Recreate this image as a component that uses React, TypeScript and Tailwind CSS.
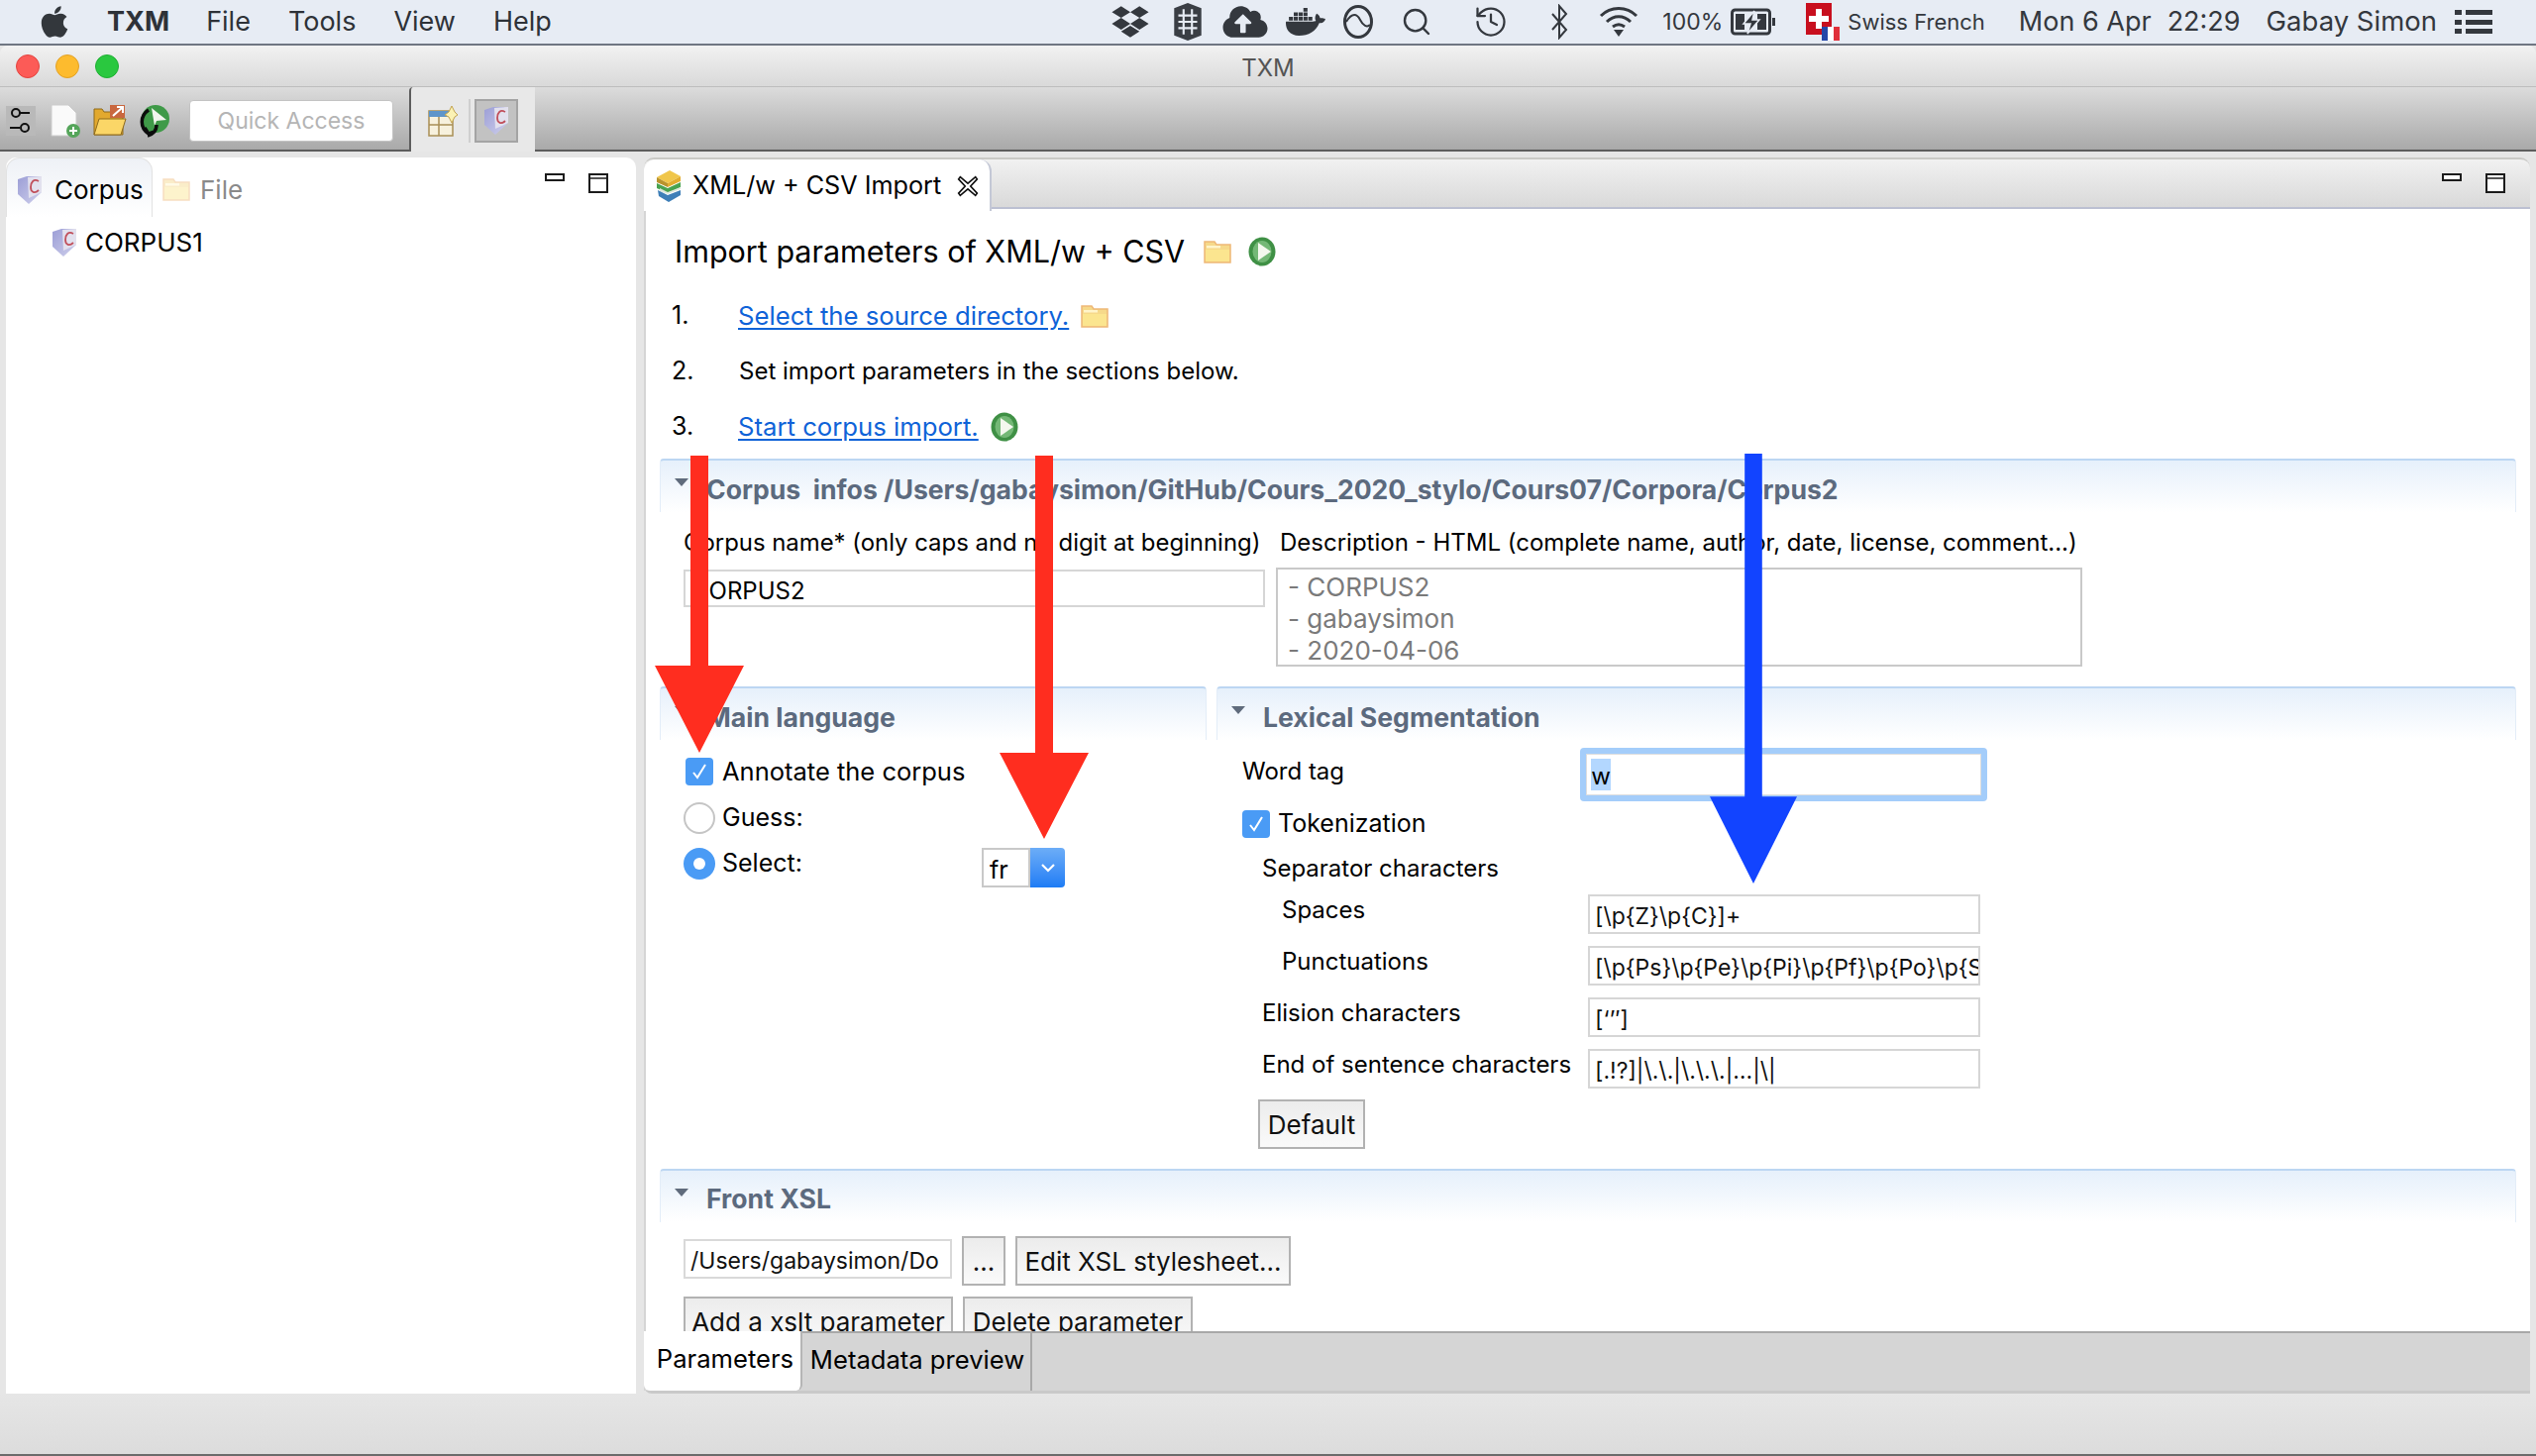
import React from "react";
import { FaApple, FaDropbox, FaCloudUploadAlt, FaDocker } from "react-icons/fa";
import { History, Search } from "lucide-react";

const CorpusIcon = ({ className = "w-[26px] h-[30px]" }: { className?: string }) => (
  <svg viewBox="0 0 26 30" className={className}>
    <defs>
      <linearGradient id="cg" x1="0" x2="1" y1="0" y2="1">
        <stop offset="0" stopColor="#9c9ed6" />
        <stop offset="1" stopColor="#cfd0ec" />
      </linearGradient>
    </defs>
    <path d="M1 4 L10 1 L25 1 L25 17 L12 29 L1 19 Z" fill="url(#cg)" />
    <path d="M11 2 L25 1 L25 17 L12 23 Z" fill="#e2e1ee" />
    <path d="M22 6 C17 3 14 7 14 12 C14 17 18 19 22 15" fill="none" stroke="#c0505c" strokeWidth="1.8" />
  </svg>
);

const Folder = ({ className = "w-[28px] h-[24px]", faded = false }: { className?: string; faded?: boolean }) => (
  <svg viewBox="0 0 28 24" className={className} opacity={faded ? 0.45 : 1}>
    <path d="M1 2 H11 L13 5 H27 V23 H1 Z" fill="#f6d98a" stroke="#eeb877" strokeWidth="1.5" />
    <rect x="2" y="10" width="24" height="12" fill="#fbe58f" />
    <rect x="3" y="6" width="14" height="2.5" fill="#fff4c9" />
  </svg>
);

const Play = ({ className = "w-[28px] h-[30px]" }: { className?: string }) => (
  <svg viewBox="0 0 28 30" className={className}>
    <ellipse cx="14" cy="15" rx="13.5" ry="14.5" fill="#3f9045" />
    <ellipse cx="14" cy="15" rx="9.5" ry="11" fill="#74b876" />
    <path d="M10 6 L23 15 L10 24 Z" fill="#f4f8ee" />
  </svg>
);

const Books = () => (
  <svg viewBox="0 0 30 34" className="w-[30px] h-[34px]">
    <path d="M3 8 L16 1 L27 7 L14 14 Z" fill="#f0c64a" />
    <path d="M3 8 L14 14 L14 18 L3 13 Z" fill="#b9932c" />
    <path d="M14 14 L27 7 L27 12 L14 18 Z" fill="#e3ad2f" />
    <path d="M3 14 L14 19 L27 13 L27 18 L14 24 L3 19 Z" fill="#49a34f" />
    <path d="M6 19 L14 23 L27 18 L27 20 L14 25 L6 22 Z" fill="#dfe8dc" />
    <path d="M4 21 L14 26 L27 21 L27 26 L15 33 L5 27 Z" fill="#3e7fb8" />
  </svg>
);

const Minimize = () => <span className="block w-[20px] h-[8px] border-[2px] border-[#1c1c1c] bg-white" />;
const Maximize = () => (
  <span className="block w-[20px] h-[20px] border-[2px] border-[#1c1c1c] bg-white">
    <span className="block h-[2px] mt-[2px] bg-[#555]" />
  </span>
);

const Triangle = () => (
  <svg viewBox="0 0 14 8" className="w-[14px] h-[8px]">
    <path d="M0 0 H14 L7 8 Z" fill="#5f6b7c" />
  </svg>
);

const Check = ({ className }: { className: string }) => (
  <span className={`flex items-center justify-center rounded-[4px] bg-[#4a9bf5] ${className}`}>
    <svg viewBox="0 0 20 20" className="w-[20px] h-[20px]">
      <path d="M4 11 L8 16 L16 3" fill="none" stroke="#fff" strokeWidth="2" />
    </svg>
  </span>
);

const Section = ({ title, className = "", leading = "leading-[58px]", children }: { title: string; className?: string; leading?: string; children?: React.ReactNode }) => (
  <section className={className}>
    <header className="h-[54px] rounded-t-[4px] border-t-[2px] border-x border-t-[#bcd6f2] border-x-[#e3edf8] [border-bottom:0] bg-gradient-to-b from-[#e6f0fb] to-white flex">
      <span className="w-[46px] pl-[14px] pt-[18px] shrink-0">
        <Triangle />
      </span>
      <h2 className={`text-[26.6px] font-bold text-[#5c6a7e] whitespace-pre ${leading}`}>{title}</h2>
    </header>
    {children}
  </section>
);

const Input = ({ value, className = "" }: { value: string; className?: string }) => (
  <div className={`h-[40px] border-2 border-[#d6d6d6] bg-white pl-[5px] pt-[3px] text-[23px] leading-[34px] text-[#111] overflow-hidden whitespace-nowrap ${className}`}>
    {value}
  </div>
);

const Button = ({ label, className = "" }: { label: string; className?: string }) => (
  <button className={`h-[50px] shrink-0 border-2 border-[#b2b2b2] bg-gradient-to-b from-[#ececec] to-[#fafafa] text-[26px] leading-[48px] text-[#111] whitespace-nowrap ${className}`}>
    {label}
  </button>
);

const FormRow = ({ label, value, indent, mt }: { label: string; value: string; indent: string; mt: string }) => (
  <div className={`flex ${mt}`}>
    <span className={`w-[349px] shrink-0 text-[24px] leading-[32px] whitespace-nowrap ${indent}`}>{label}</span>
    <Input value={value} className="w-[396px]" />
  </div>
);

const Arrow = ({ color, className, head }: { color: string; className: string; head: string }) => (
  <svg viewBox="0 0 90 440" preserveAspectRatio="none" className={`absolute z-10 ${className}`}>
    <path d={head} fill={color} />
  </svg>
);

export default function App() {
  return (
    <div className="relative w-[2560px] h-[1470px] overflow-hidden flex flex-col bg-[#e6e6e6] text-black font-['Inter','Liberation_Sans',sans-serif]">
      {/* macOS menu bar */}
      <div className="h-[44px] shrink-0 bg-[#e7ecf4] flex items-center text-[#2e3238] text-[27px]">
        <FaApple className="ml-[39px] w-[32px] h-[36px] text-[#33373c]" />
        <span className="ml-[37px] font-bold">TXM</span>
        <span className="ml-[37px]">File</span>
        <span className="ml-[38px]">Tools</span>
        <span className="ml-[38px]">View</span>
        <span className="ml-[38px]">Help</span>
        <div className="ml-auto flex items-center text-[#34383e]">
          <FaDropbox className="w-[40px] h-[36px]" />
          <svg viewBox="0 0 30 36" className="ml-[22px] w-[32px] h-[38px]">
            <path d="M15 0 L28 5 V31 L15 36 L2 31 V5 Z" fill="#3a3e44" />
            <path d="M6 12 H24 M6 18 H24 M6 24 H24 M11 6 V30 M19 6 V30" stroke="#e7ecf4" strokeWidth="2" />
          </svg>
          <FaCloudUploadAlt className="ml-[19px] w-[46px] h-[36px]" />
          <FaDocker className="ml-[18px] w-[40px] h-[36px]" />
          <svg viewBox="0 0 30 34" className="ml-[18px] w-[30px] h-[34px]">
            <ellipse cx="15" cy="17" rx="13.5" ry="15.5" fill="none" stroke="#34383e" strokeWidth="3" />
            <path d="M3 17 C9 7 14 9 17 15 C20 21 24 23 27 20" fill="none" stroke="#34383e" strokeWidth="2" />
          </svg>
          <Search className="ml-[28px] w-[32px] h-[34px]" strokeWidth={1.8} />
          <History className="ml-[40px] w-[38px] h-[36px]" strokeWidth={1.5} />
          <svg viewBox="0 0 20 36" className="ml-[40px] w-[20px] h-[36px]">
            <path d="M3 10 L17 26 L10 34 V2 L17 10 L3 26" fill="none" stroke="#34383e" strokeWidth="2" />
          </svg>
          <svg viewBox="0 0 40 32" className="ml-[30px] w-[40px] h-[32px]">
            <path d="M2 10 C12 0 28 0 38 10 M8 16 C15 9 25 9 32 16 M14 21 C18 18 22 18 26 21" fill="none" stroke="#34383e" strokeWidth="3" />
            <path d="M15 24 H25 L20 31 Z" fill="#34383e" />
          </svg>
          <span className="ml-[24px] text-[23px]">100%</span>
          <svg viewBox="0 0 46 30" className="ml-[8px] w-[46px] h-[30px]">
            <rect x="1.5" y="3" width="38" height="24" rx="3" fill="none" stroke="#34383e" strokeWidth="3" />
            <path d="M5 7 H14 V23 H5 Z M27 7 H36 V23 H27 Z" fill="#34383e" />
            <path d="M24 4 L13 17 H20 L17 27 L29 13 H22 Z" fill="#34383e" stroke="#e7ecf4" strokeWidth="1.5" />
            <rect x="42" y="11" width="3" height="8" fill="#34383e" />
          </svg>
          <span className="relative ml-[30px] w-[34px] h-[38px]">
            <span className="absolute left-0 top-0 w-[26px] h-[32px] bg-[#c80f1e]" />
            <span className="absolute left-[10px] top-[6px] w-[6px] h-[20px] bg-white" />
            <span className="absolute left-[3px] top-[13px] w-[20px] h-[6px] bg-white" />
            <svg viewBox="0 0 18 14" className="absolute right-0 bottom-0 w-[18px] h-[14px]">
              <rect width="6" height="14" fill="#2447a8" />
              <rect x="6" width="6" height="14" fill="#fff" />
              <rect x="12" width="6" height="14" fill="#e0303a" />
            </svg>
          </span>
          <span className="ml-[8px] text-[22px]">Swiss French</span>
          <span className="ml-[34px] text-[27px]">Mon 6 Apr</span>
          <span className="ml-[16px] text-[27px]">22:29</span>
          <span className="ml-[26px] text-[27.5px]">Gabay Simon</span>
          <span className="ml-[18px] mr-[44px] w-[38px] h-[24px] flex flex-col justify-between">
            {[0, 1, 2].map((i) => (
              <span key={i} className="h-[5px] flex gap-[4px]">
                <span className="w-[7px] bg-[#34383e]" />
                <span className="flex-1 bg-[#34383e]" />
              </span>
            ))}
          </span>
        </div>
      </div>

      {/* Window */}
      <div className="h-[2px] shrink-0 bg-[#6f7682]" />
      <div className="relative h-[42px] shrink-0 rounded-t-[8px] bg-gradient-to-b from-[#f2f2f2] to-[#d9d9d9] border-b border-[#bdbdbd] flex items-center">
        <span className="ml-[16px] w-[24px] h-[24px] rounded-full bg-[#fc5b57] border border-[#e3443f]" />
        <span className="ml-[16px] w-[24px] h-[24px] rounded-full bg-[#fdbb2e] border border-[#e2a125]" />
        <span className="ml-[16px] w-[24px] h-[24px] rounded-full bg-[#2ac83f] border border-[#1faf33]" />
        <span className="absolute inset-x-0 top-[5px] text-center text-[24px] text-[#555]">TXM</span>
      </div>

      {/* Toolbar */}
      <div className="h-[65px] shrink-0 bg-gradient-to-b from-[#dcdcdc] to-[#a9a9a9] border-b-[2px] border-[#5d5d5d] flex">
        <div className="flex items-center pl-[6px] pt-[5px]">
          <svg viewBox="0 0 30 30" className="w-[30px] h-[30px]">
            <rect width="30" height="30" fill="#b9b9b9" />
            <circle cx="10" cy="7" r="4" fill="none" stroke="#111" strokeWidth="2" />
            <path d="M14 7 H24 M4 22 H14" stroke="#111" strokeWidth="2" />
            <circle cx="19" cy="22" r="4" fill="none" stroke="#111" strokeWidth="2" />
          </svg>
          <svg viewBox="0 0 32 34" className="ml-[14px] w-[32px] h-[34px]">
            <path d="M2 1 H19 L27 9 V32 H2 Z" fill="#fafafa" stroke="#ccc" />
            <circle cx="24" cy="27" r="7" fill="#55a55a" />
            <path d="M24 23 V31 M20 27 H28" stroke="#fff" strokeWidth="2" />
          </svg>
          <svg viewBox="0 0 34 34" className="ml-[12px] w-[34px] h-[34px]">
            <path d="M1 5 H9 L11 8 H30 V31 H1 Z" fill="#e2a92f" stroke="#8e6a1c" />
            <path d="M6 15 H33 L28 31 H1 Z" fill="#fbd667" stroke="#8e6a1c" />
            <rect x="17" y="1" width="15" height="13" fill="#c9673f" />
            <path d="M20 12 L29 4 M24 3 H30 V9" stroke="#fff" strokeWidth="2" fill="none" />
          </svg>
          <svg viewBox="0 0 32 34" className="ml-[12px] w-[32px] h-[34px]">
            <ellipse cx="17" cy="15" rx="14" ry="14" fill="#3f9a48" />
            <path d="M13 4 L28 16 L18 17 L16 22 Z" fill="#f3f6ee" />
            <path d="M10 6 C1 12 1 24 10 30 M10 30 L6 24 M10 30 L16 28 M18 21 C18 27 14 31 9 32" fill="none" stroke="#0c0c0c" strokeWidth="3.5" />
          </svg>
          <div className="ml-[19px] w-[206px] h-[42px] rounded-[4px] bg-white border border-[#c4c4c4] flex items-center justify-center text-[23px] text-[#b5b5b5]">
            Quick Access
          </div>
        </div>
        <div className="ml-[16px] w-[127px] h-[65px] bg-[#e8e8e8] border-l-[2px] border-[#5d5d5d] rounded-tl-[4px] flex items-center pl-[17px] pt-[3px] shrink-0 -mb-[2px]">
          <svg viewBox="0 0 30 32" className="w-[30px] h-[32px]">
            <rect x="1" y="6" width="24" height="25" fill="#f7f1dd" stroke="#a98f55" strokeWidth="1.5" />
            <rect x="1" y="6" width="24" height="6" fill="#5f95c9" />
            <path d="M1 20 H25 M11 12 V31" stroke="#a98f55" strokeWidth="1.5" />
            <path d="M24 1 L27 7 L30 10 L27 12 L24 18 L21 12 L17 10 L21 7 Z" fill="#fbf2b4" stroke="#c2a350" />
          </svg>
          <span className="ml-[11px] h-[44px] w-[2px] bg-[#cfcfcf]" />
          <span className="ml-[4px] w-[44px] h-[44px] shrink-0 bg-[#c2c2c2] border-[2px] border-[#a4a4a4] flex items-center justify-center">
            <CorpusIcon />
          </span>
        </div>
      </div>

      {/* Workbench */}
      <div className="h-[1254px] shrink-0 flex pt-[6px] pl-[6px] pr-[6px] gap-[8px]">
        {/* Left view */}
        <aside className="w-[636px] shrink-0 rounded-t-[10px] bg-white flex flex-col">
          <div className="h-[60px] flex relative shrink-0">
            <div className="w-[148px] h-[60px] rounded-t-[14px] border-t border-x border-[#e2e2e2] bg-gradient-to-b from-[#eef1f6] to-white flex items-center pl-[10px] pt-[4px] text-[26px]">
              <CorpusIcon />
              <span className="ml-[12px]">Corpus</span>
            </div>
            <div className="flex items-center pl-[10px] pt-[4px]">
              <Folder faded />
              <span className="ml-[10px] text-[26px] text-[#8a8a8a]">File</span>
            </div>
            <div className="ml-auto mr-[28px] flex gap-[24px] pt-[16px]">
              <Minimize />
              <Maximize />
            </div>
          </div>
          <div className="flex items-center pl-[46px] pt-[6px]">
            <CorpusIcon />
            <span className="ml-[8px] text-[26px]">CORPUS1</span>
          </div>
        </aside>

        {/* Editor */}
        <main className="w-[1904px] shrink-0 flex flex-col h-[1248px] border-b-[3px] border-[#c9c9c9] rounded-bl-[8px]">
          <div className="h-[52px] shrink-0 flex border-t-[2px] border-[#c9c9c6] rounded-t-[10px] bg-gradient-to-b from-[#f1f1f1] to-[#d8d8d8] relative">
            <div className="w-[351px] h-[52px] bg-white rounded-t-[12px] border-r-[2px] border-[#c4c8d6] flex items-center pl-[10px] pt-[2px] z-[1]">
              <Books />
              <span className="ml-[9px] text-[25.2px]">XML/w + CSV Import</span>
              <svg viewBox="0 0 20 20" className="ml-[16px] w-[22px] h-[22px]">
                <path d="M3 1.5 L10 7.5 L17 1.5 L18.5 3.5 L12.5 10 L18.5 16.5 L17 18.5 L10 12.5 L3 18.5 L1.5 16.5 L7.5 10 L1.5 3.5 Z" fill="#fff" stroke="#111" strokeWidth="1.5" />
              </svg>
            </div>
            <div className="flex-1 border-b-[2px] border-[#bcc0d2] flex justify-end gap-[24px] pr-[25px] pt-[14px]">
              <Minimize />
              <Maximize />
            </div>
          </div>

          <div className="flex-1 min-h-0 overflow-hidden bg-white px-[14px] text-[24px] border-l-[2px] border-[#d5d5d5]">
            {/* Head */}
            <div className="h-[252px] pl-[15px] pt-[24px]">
              <div className="flex items-center h-[38px]">
                <h1 className="text-[30.5px] whitespace-nowrap">Import parameters of XML/w + CSV</h1>
                <Folder className="ml-[18px] w-[30px] h-[24px]" />
                <Play className="ml-[15px] w-[30px] h-[30px]" />
              </div>
              <ol className="mt-[18px] text-[25px]">
                <li className="flex items-center h-[56px]">
                  <span className="w-[67px] -ml-[3px]">1.</span>
                  <a className="text-[#0f63d8] underline underline-offset-[3px] text-[25.7px]">Select the source directory.</a>
                  <Folder className="ml-[12px] w-[28px] h-[24px]" />
                </li>
                <li className="flex items-center h-[56px]">
                  <span className="w-[68px] -ml-[3px]">2.</span>
                  <span className="text-[24px]">Set import parameters in the sections below.</span>
                </li>
                <li className="flex items-center h-[56px]">
                  <span className="w-[67px] -ml-[3px]">3.</span>
                  <a className="text-[#0f63d8] underline underline-offset-[3px] text-[25.7px]">Start corpus import.</a>
                  <Play className="ml-[12px] w-[28px] h-[30px]" />
                </li>
              </ol>
            </div>

            {/* Corpus infos */}
            <Section title="Corpus  infos /Users/gabaysimon/GitHub/Cours_2020_stylo/Cours07/Corpora/Corpus2" className="h-[230px]">
              <div className="flex pl-[24px] pt-[15px]">
                <div className="w-[602px] shrink-0">
                  <p className="text-[23.9px] leading-[32px] whitespace-nowrap">Corpus name* (only caps and no digit at beginning)</p>
                  <div className="mt-[11px] w-[587px] h-[38px] border-2 border-[#d6d6d6] pl-[6px] pt-[1px] text-[24px] leading-[38px]">CORPUS2</div>
                </div>
                <div>
                  <p className="text-[24px] leading-[32px] whitespace-nowrap">Description - HTML (complete name, author, date, license, comment...)</p>
                  <div className="-ml-[4px] mt-[9px] w-[814px] h-[100px] border-2 border-[#c9c9c9] pl-[10px] pt-[2px] text-[26px] leading-[32px] text-[#7a7a7a]">
                    <div>- CORPUS2</div>
                    <div>- gabaysimon</div>
                    <div>- 2020-04-06</div>
                  </div>
                </div>
              </div>
            </Section>

            {/* Main language + Lexical */}
            <div className="flex gap-[10px] h-[487px]">
              <Section title="Main language" className="w-[552px] shrink-0">
                <div className="pl-[24px] pt-[17px]">
                  <label className="flex items-center h-[30px] pl-[2px] text-[25.5px]">
                    <Check className="w-[28px] h-[28px]" />
                    <span className="ml-[9px]">Annotate the corpus</span>
                  </label>
                  <label className="flex items-center h-[32px] mt-[16px] text-[25px]">
                    <span className="w-[32px] h-[32px] rounded-full border-2 border-[#c5c5c5] bg-white" />
                    <span className="ml-[7px]">Guess:</span>
                  </label>
                  <label className="flex items-center h-[32px] mt-[14px] text-[25px] relative">
                    <span className="w-[32px] h-[32px] rounded-full bg-[#4a9bf5] flex items-center justify-center">
                      <span className="w-[12px] h-[12px] rounded-full bg-white" />
                    </span>
                    <span className="ml-[7px]">Select:</span>
                    <span className="absolute left-[301px] top-[0px] w-[84px] h-[40px] flex">
                      <span className="w-[49px] border-2 border-[#c9c9c9] text-[25px] pl-[6px] leading-[40px]">fr</span>
                      <span className="flex-1 rounded-r-[4px] bg-gradient-to-b from-[#6cadf7] to-[#1c7cf5] flex items-center justify-center">
                        <svg viewBox="0 0 16 10" className="w-[16px] h-[10px]">
                          <path d="M2 2 L8 8 L14 2" fill="none" stroke="#fff" strokeWidth="2.2" />
                        </svg>
                      </span>
                    </span>
                  </label>
                </div>
              </Section>

              <Section title="Lexical Segmentation" className="flex-1">
                <div className="pl-[26px]">
                  <div className="flex h-[54px] mt-[8px]">
                    <span className="w-[341px] shrink-0 text-[24px] leading-[32px] pt-[8px]">Word tag</span>
                    <div className="w-[411px] h-[54px] rounded-[4px] bg-[#a4cdfa] p-[6px]">
                      <div className="h-[42px] bg-white border border-[#dedede] pl-[4px] pt-[4px]">
                        <span className="block w-[20px] h-[32px] bg-[#b3d7ff] text-center text-[24px] leading-[36px]">w</span>
                      </div>
                    </div>
                  </div>
                  <label className="flex items-center h-[28px] mt-[9px]">
                    <Check className="w-[28px] h-[28px]" />
                    <span className="ml-[8px] text-[25px]">Tokenization</span>
                  </label>
                  <p className="ml-[20px] mt-[15px] leading-[32px] text-[24px]">Separator characters</p>
                  <FormRow label="Spaces" value="[\p{Z}\p{C}]+" indent="pl-[40px]" mt="mt-[10px]" />
                  <FormRow label="Punctuations" value="[\p{Ps}\p{Pe}\p{Pi}\p{Pf}\p{Po}\p{S" indent="pl-[40px]" mt="mt-[12px]" />
                  <FormRow label="Elision characters" value="[‘’′]" indent="pl-[20px]" mt="mt-[12px]" />
                  <FormRow label="End of sentence characters" value="[.!?]|\.\.|\.\.\.|…|\|" indent="pl-[20px]" mt="mt-[12px]" />
                  <Button label="Default" className="ml-[16px] mt-[11px] w-[108px]" />
                </div>
              </Section>
            </div>

            {/* Front XSL */}
            <Section title="Front XSL" leading="leading-[56px]">
              <div className="pl-[24px] pt-[14px]">
                <div className="flex items-center gap-[10px]">
                  <Input value="/Users/gabaysimon/Do" className="w-[271px] -mt-[4px] !border-[#d9d9d9]" />
                  <Button label="..." className="w-[44px]" />
                  <Button label="Edit XSL stylesheet..." className="w-[278px]" />
                </div>
                <div className="flex gap-[10px] mt-[11px]">
                  <Button label="Add a xslt parameter" className="w-[272px]" />
                  <Button label="Delete parameter" className="w-[232px]" />
                </div>
              </div>
            </Section>
          </div>

          {/* Bottom tabs */}
          <div className="h-[60px] shrink-0 flex bg-[#d5d5d5] border-t-[2px] border-[#a8a8a8] text-[25.6px]">
            <div className="w-[160px] h-[60px] -mt-[2px] bg-white rounded-b-[6px] border-r-[2px] border-[#b5b5b5] flex items-center justify-center pb-[4px] pl-[6px]">Parameters</div>
            <div className="w-[232px] border-r-[2px] border-[#a8a8a8] flex items-center justify-center pb-[4px] pl-[2px]">Metadata preview</div>
          </div>
        </main>
      </div>

      {/* Window bottom strip */}
      <div className="flex-1 bg-gradient-to-b from-[#e6e6e6] to-[#dcdcdc] border-b-[2px] border-[#6b6b6b]" />

      {/* Annotation arrows */}
      <Arrow color="#ff2d1f" className="left-[661px] top-[460px] w-[90px] h-[300px]" head="M36 0 H54 V311 H90 L45 440 L0 311 H36 Z" />
      <Arrow color="#ff2d1f" className="left-[1009px] top-[460px] w-[90px] h-[387px]" head="M36 0 H54 V341 H90 L45 440 L0 341 H36 Z" />
      <Arrow color="#1244ff" className="left-[1726px] top-[458px] w-[88px] h-[434px]" head="M36 0 H54 V351 H90 L45 440 L0 351 H36 Z" />
    </div>
  );
}
